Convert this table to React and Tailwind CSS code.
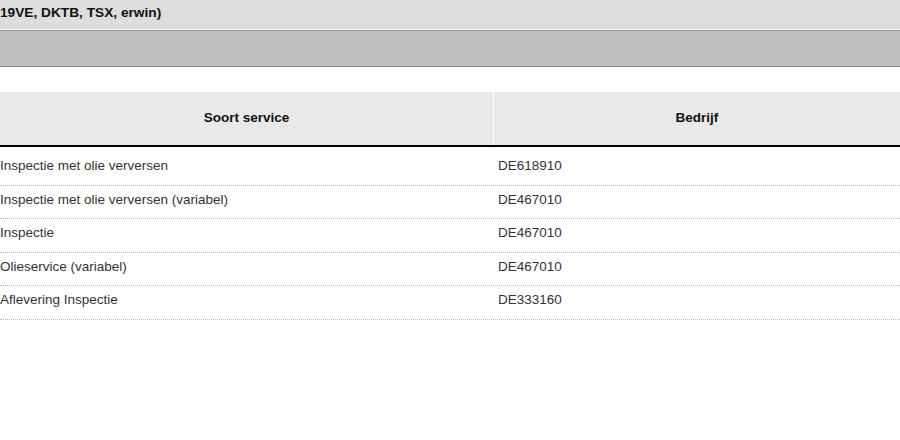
export default function App() {
  const rows = [
    ["Inspectie met olie verversen", "DE618910"],
    ["Inspectie met olie verversen (variabel)", "DE467010"],
    ["Inspectie", "DE467010"],
    ["Olieservice (variabel)", "DE467010"],
    ["Aflevering Inspectie", "DE333160"],
  ];
  return (
    <div className="w-[900px] h-[440px] bg-white overflow-hidden text-[13.5px] text-[#333]" style={{ fontFamily: '"Liberation Sans", Arial, sans-serif' }}>
      <div className="h-[29px] bg-[#dddddd] flex items-center font-bold text-[#111] pb-[7px] pt-[4px] text-[13.7px]">
        <span>19VE, DKTB, TSX, erwin)</span>
      </div>
      <div className="h-px bg-[#f2f2f2]" />
      <div className="h-[37px] bg-[#c0c0c0] border-t border-[#9a9a9a] border-b border-b-[#808080]" />
      <div className="h-[25px]" />
      <div className="flex h-[55px] bg-[#e9e9e9] border-b-2 border-black font-bold text-[#111]">
        <div className="w-[493px] flex items-center justify-center">Soort service</div>
        <div className="w-px bg-white" />
        <div className="flex-1 flex items-center justify-center">Bedrijf</div>
      </div>
      {rows.map((r, i) => (
        <div key={i} className={`flex border-b border-dotted border-[#b8b8b8] ${i === 0 ? "h-[38.5px] pt-[9px]" : "h-[33.5px] pt-[4px]"}`}>
          <div className="w-[493px]">{r[0]}</div>
          <div className="w-px" />
          <div className="flex-1 pl-[4px]">{r[1]}</div>
        </div>
      ))}
    </div>
  );
}
